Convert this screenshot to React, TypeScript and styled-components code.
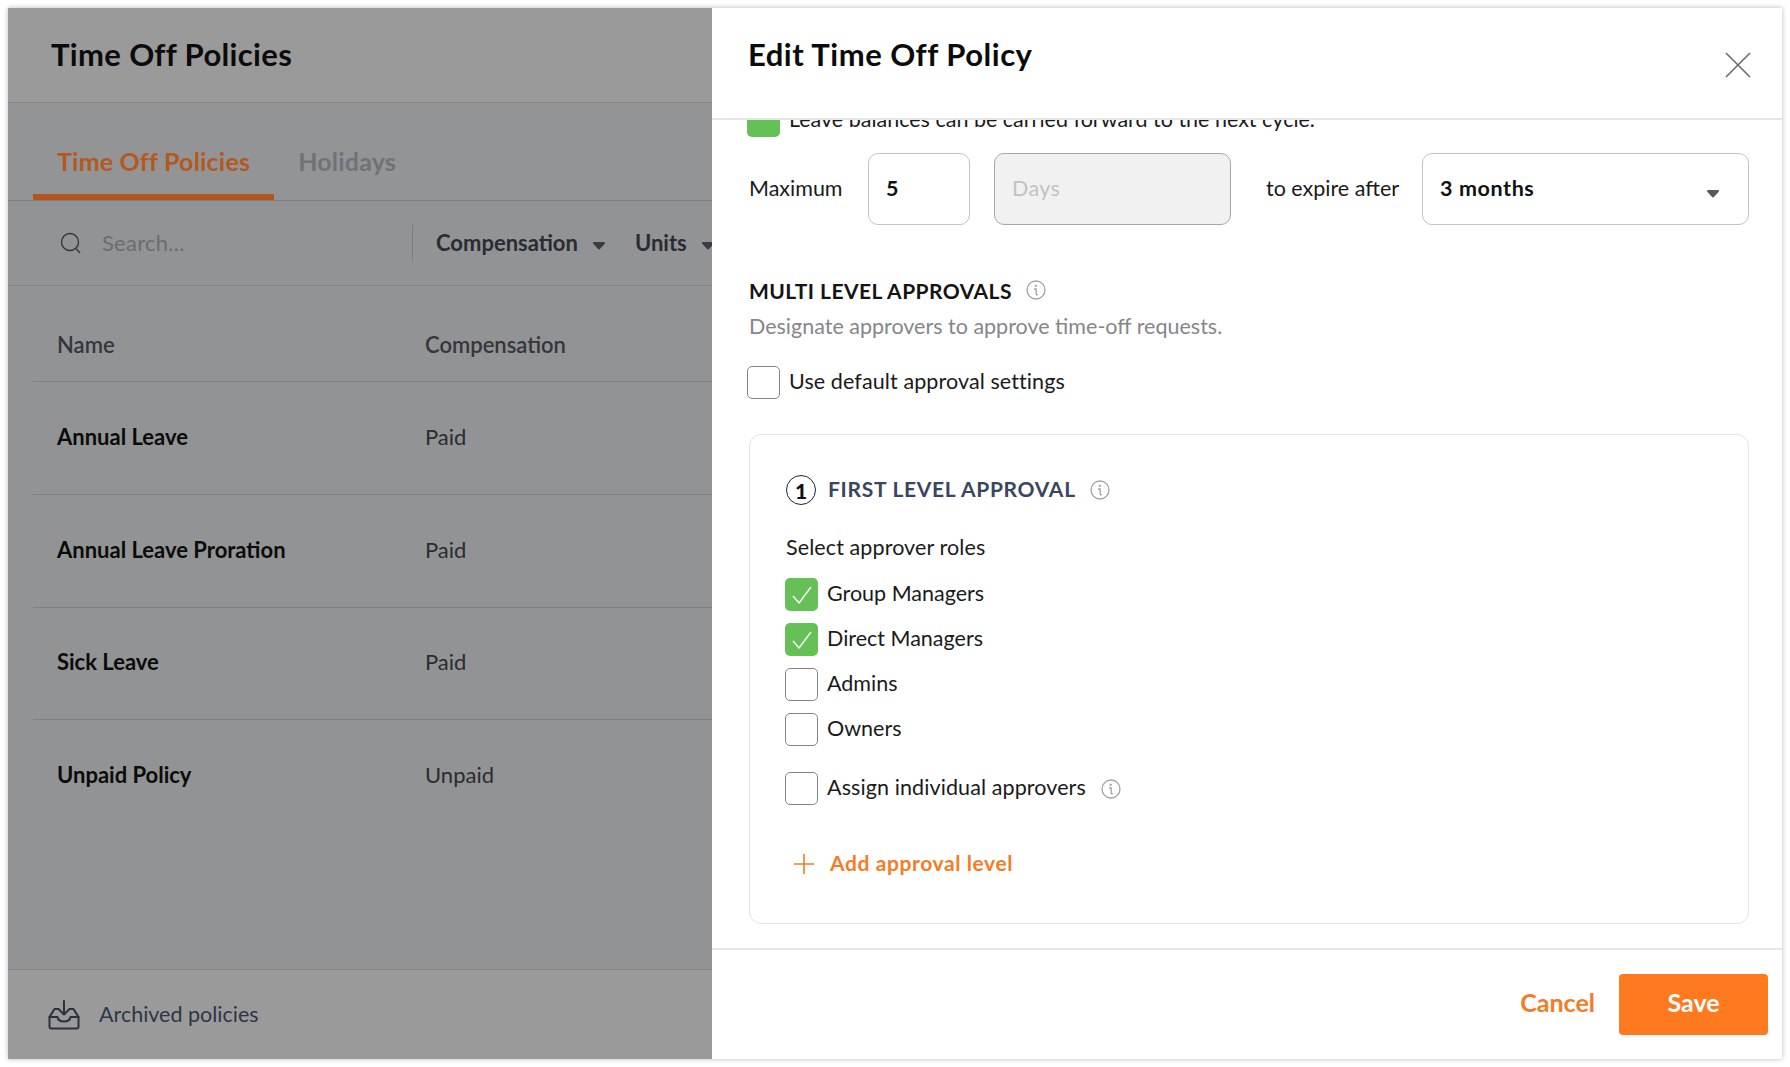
import styled, { createGlobalStyle } from 'styled-components'
import { ReactNode } from 'react'

const GlobalStyle = createGlobalStyle`
  html, body {
    margin: 0;
    padding: 0;
    background: #ffffff;
  }
  body {
    font-family: 'Lato', 'Open Sans', sans-serif;
    color: #111111;
  }
  * {
    box-sizing: border-box;
  }
`

const Page = styled.div`
  width: 1790px;
  height: 1067px;
  padding: 8px;
  background: #ffffff;
`

const Frame = styled.div`
  display: grid;
  grid-template-columns: 704px 1070px;
  height: 1051px;
  box-shadow: 0 0 5px rgba(0, 0, 0, 0.28);
  overflow: hidden;
`

const LeftPane = styled.div`
  display: flex;
  flex-direction: column;
  min-width: 0;
  overflow: hidden;
  background: #929395;
`

const TopBar = styled.div`
  flex: none;
  height: 95px;
  padding: 26px 0 0 43px;
  background: #9a9a9a;
  border-bottom: 1px solid #858688;
`

const PageTitle = styled.h1`
  margin: 0;
  font-size: 31px;
  line-height: 40px;
  font-weight: 700;
  letter-spacing: 0.35px;
  color: #0b0b0b;
`

const TabBar = styled.div`
  flex: none;
  display: flex;
  height: 98px;
  padding: 0 0 0 25px;
  align-items: flex-end;
  background: #939496;
  border-bottom: 1px solid #7f8082;
`

const Tab = styled.div<{ active?: boolean }>`
  height: 97px;
  padding: 40px 24px 0;
  font-size: 25px;
  line-height: 36px;
  font-weight: 700;
  letter-spacing: 0.2px;
  color: ${({ active }) => (active ? '#b3591f' : '#6f7277')};
  border-bottom: ${({ active }) => (active ? '6px solid #b3561d' : '0')};
`

const FilterBar = styled.div`
  flex: none;
  display: flex;
  align-items: center;
  height: 85px;
  padding-left: 52px;
  border-bottom: 1px solid #838486;
  white-space: nowrap;
`

const SearchBox = styled.div`
  flex: none;
  display: flex;
  align-items: center;
  gap: 20px;
  width: 353px;
  height: 36px;
  border-right: 1px solid #7d7e80;
`

const SearchHint = styled.span`
  margin-bottom: 2px;
  font-size: 22px;
  letter-spacing: 0.25px;
  color: #6b6d71;
`

const FilterLabel = styled.span<{ first?: boolean }>`
  flex: none;
  margin-left: ${({ first }) => (first ? '23px' : '29px')};
  margin-bottom: 2px;
  font-size: 22px;
  font-weight: 700;
  color: #2a2c33;
`

const CaretGlyph = styled.svg<{ drop?: number; gapLeft?: number }>`
  flex: none;
  width: 14px;
  height: 9px;
  margin-left: ${({ gapLeft }) => gapLeft ?? 14}px;
  margin-top: ${({ drop }) => drop ?? 4}px;
`

function Caret({ drop, gapLeft, color = '#3c3d42' }: { drop?: number; gapLeft?: number; color?: string }) {
  return (
    <CaretGlyph drop={drop} gapLeft={gapLeft} viewBox="0 0 14 9" fill={color} stroke={color} strokeWidth="2" strokeLinejoin="round">
      <path d="M2 2h10L7 7.500z" />
    </CaretGlyph>
  )
}

const TableRow = styled.div<{ head?: boolean }>`
  flex: none;
  display: grid;
  grid-template-columns: 368px 1fr;
  align-items: center;
  height: ${({ head }) => (head ? '95.5px' : '112.5px')};
  margin-left: 25px;
  padding-left: 24px;
  padding-top: ${({ head }) => (head ? '24px' : '0')};
  border-bottom: ${({ head }) => (head ? '1px solid #7f8082' : '0')};
  font-size: 22px;
  color: #2a2c33;
  & + & + & {
    border-top: 1px solid #7f8082;
  }
`

const HeadCell = styled.span`
  margin-bottom: 2px;
  font-weight: 600;
  color: #34363c;
`

const NameCell = styled.span`
  margin-bottom: 3px;
  font-weight: 700;
  color: #0b0b0b;
`

const PayCell = styled.span`
  margin-bottom: 3px;
`

const ArchiveBar = styled.div`
  flex: none;
  display: flex;
  align-items: center;
  gap: 19px;
  height: 90px;
  margin-top: auto;
  padding-left: 40px;
  background: #9a9a9a;
  border-top: 1px solid #858688;
  font-size: 21.5px;
  color: #2f3546;
`

const ArchiveText = styled.span`
  margin-bottom: 2px;
`

const Drawer = styled.div`
  display: flex;
  flex-direction: column;
  min-width: 0;
  background: #ffffff;
`

const DrawerHeader = styled.div`
  flex: none;
  display: flex;
  justify-content: space-between;
  height: 112px;
  padding: 26px 31px 0 36px;
  border-bottom: 2px solid #e6e6e6;
`

const DrawerTitle = styled.h2`
  margin: 0;
  font-size: 31px;
  line-height: 40px;
  font-weight: 700;
  letter-spacing: 0.5px;
  color: #0b0b0b;
`

const CloseButton = styled.button`
  flex: none;
  align-self: flex-start;
  width: 26px;
  height: 26px;
  margin-top: 18px;
  padding: 0;
  border: 0;
  background: none;
  color: #6a6a6a;
`

const DrawerBody = styled.div`
  flex: 1;
  min-height: 0;
  overflow: hidden;
  padding: 0 33px 0 37px;
`

const Label = styled.span<{ tight?: boolean }>`
  margin-bottom: 4px;
  letter-spacing: ${({ tight }) => (tight ? 0 : 0.1)}px;
`

const CarriedRow = styled.div`
  display: flex;
  align-items: center;
  gap: 9px;
  margin-top: -16px;
  margin-left: -2px;
  font-size: 21.5px;
  color: #1a1a1a;
`

const LimitRow = styled.div`
  display: flex;
  align-items: center;
  height: 72px;
  margin-top: 16px;
  font-size: 21.5px;
  color: #1a1a1a;
`

const MaximumLabel = styled(Label)`
  width: 119px;
  flex: none;
  margin-bottom: 3px;
`

const ExpireLabel = styled(Label)`
  width: 156px;
  flex: none;
  margin-left: 35px;
  margin-bottom: 3px;
`

const Field = styled.div<{ width: number; disabled?: boolean }>`
  flex: none;
  display: flex;
  align-items: center;
  justify-content: space-between;
  width: ${({ width }) => width}px;
  height: 72px;
  padding: 0 28px 3px 17px;
  border: 1.5px solid ${({ disabled }) => (disabled ? '#a8a8a8' : '#c4c4c4')};
  border-radius: 10px;
  background: ${({ disabled }) => (disabled ? '#f1f1f1' : '#ffffff')};
  color: ${({ disabled }) => (disabled ? '#c2c2c2' : '#111111')};
  font-weight: ${({ disabled }) => (disabled ? 400 : 700)};
  letter-spacing: ${({ disabled }) => (disabled ? 0.4 : 0.6)}px;

  & + & {
    margin-left: 24px;
  }
`

const SectionHeading = styled.div`
  display: flex;
  align-items: center;
  gap: 14px;
  height: 28px;
  margin-top: 51px;
  font-size: 21px;
  font-weight: 700;
  letter-spacing: 0.45px;
  color: #141414;
`

const SectionHint = styled.p`
  margin: 8px 0 0;
  font-size: 21.5px;
  line-height: 28px;
  color: #85868a;
`

const DefaultRow = styled(CarriedRow)`
  margin-top: 26px;
`

const Box = styled.span<{ checked?: boolean }>`
  flex: none;
  display: flex;
  align-items: center;
  justify-content: center;
  width: 33px;
  height: 33px;
  border-radius: 5px;
  border: ${({ checked }) => (checked ? '0' : '1.5px solid #858585')};
  background: ${({ checked }) => (checked ? '#65c056' : '#ffffff')};
  color: #ffffff;
`

const ApprovalCard = styled.div`
  height: 490px;
  margin-top: 35px;
  padding: 40px 0 0 35px;
  border: 1.5px solid #e3e3e3;
  border-radius: 12px;
`

const LevelHeading = styled.div`
  display: flex;
  align-items: center;
  height: 30px;
  font-size: 21px;
  font-weight: 700;
  letter-spacing: 0.7px;
  color: #3b4560;
`

const LevelText = styled.span`
  margin-bottom: 4px;
`

const LevelNumber = styled.span`
  flex: none;
  display: flex;
  align-items: center;
  justify-content: center;
  width: 30px;
  height: 30px;
  margin: 0 12px 0 1px;
  border: 1.5px solid #1d2438;
  border-radius: 50%;
  font-size: 21px;
  font-weight: 900;
  letter-spacing: 0;
  color: #0f0f0f;
`

const RolesLabel = styled.div`
  margin: 28px 0 17px 1px;
  font-size: 21.5px;
  line-height: 28px;
  letter-spacing: 0.1px;
  color: #1a1a1a;
`

const RoleList = styled.div`
  display: flex;
  flex-direction: column;
  gap: 12px;
`

const RoleRow = styled.label`
  display: flex;
  align-items: center;
  gap: 9px;
  height: 33px;
  font-size: 21.5px;
  color: #1a1a1a;
`

const AssignRow = styled(RoleRow)`
  margin-top: 26px;
`

const AddLevel = styled.div`
  display: flex;
  align-items: center;
  gap: 16px;
  height: 28px;
  margin: 45px 0 0 9px;
  font-size: 21px;
  font-weight: 700;
  letter-spacing: 0.6px;
  color: #f57c25;
`

const DrawerFooter = styled.div`
  flex: none;
  display: flex;
  align-items: flex-start;
  justify-content: flex-end;
  gap: 24px;
  height: 111px;
  padding: 24px 14px 0 0;
  border-top: 2px solid #e6e6e6;
`

const CancelButton = styled.button`
  height: 61px;
  padding: 0 0 6px;
  border: 0;
  background: none;
  font-family: inherit;
  font-size: 25px;
  font-weight: 700;
  color: #f57c25;
`

const SaveButton = styled.button`
  width: 149px;
  height: 61px;
  padding: 0 0 6px;
  border: 0;
  border-radius: 4px;
  background: #ff7a1f;
  font-family: inherit;
  font-size: 25px;
  font-weight: 700;
  color: #ffffff;
`

const InfoGlyph = styled.svg<{ gapLeft?: number }>`
  flex: none;
  width: 20px;
  height: 20px;
  margin-left: ${({ gapLeft }) => gapLeft ?? 0}px;
  color: #a2a2a2;
`

function InfoIcon({ gapLeft }: { gapLeft?: number }) {
  return (
    <InfoGlyph gapLeft={gapLeft} viewBox="0 0 20 20" fill="none" stroke="currentColor" strokeWidth="1.3">
      <circle cx="10" cy="10" r="9" />
      <path d="M8.4 9h1.800v5.200c0 .5.4.7 1.200.5" strokeLinecap="round" />
      <circle cx="9.800" cy="5.800" r=".5" fill="currentColor" />
    </InfoGlyph>
  )
}

function CheckMark() {
  return (
    <svg width="22" height="20" viewBox="0 0 22 20" fill="none" stroke="currentColor" strokeWidth="1.4">
      <path d="M2 11l6 7L20 2" strokeLinejoin="round" />
    </svg>
  )
}

function Role({ checked, children }: { checked?: boolean; children: ReactNode }) {
  return (
    <RoleRow>
      <Box checked={checked}>{checked && <CheckMark />}</Box>
      <Label tight>{children}</Label>
    </RoleRow>
  )
}

const policies = [
  ['Annual Leave', 'Paid'],
  ['Annual Leave Proration', 'Paid'],
  ['Sick Leave', 'Paid'],
  ['Unpaid Policy', 'Unpaid'],
]

export default function App() {
  return (
    <Page>
      <GlobalStyle />
      <Frame>
        <LeftPane>
          <TopBar>
            <PageTitle>Time Off Policies</PageTitle>
          </TopBar>
          <TabBar>
            <Tab active>Time Off Policies</Tab>
            <Tab>Holidays</Tab>
          </TabBar>
          <FilterBar>
            <SearchBox>
              <svg width="22" height="24" viewBox="0 0 22 24" fill="none" stroke="#34363c" strokeWidth="1.4">
                <circle cx="10" cy="11" r="8.500" />
                <path d="M16 17.500l4 4.500" />
              </svg>
              <SearchHint>Search...</SearchHint>
            </SearchBox>
            <FilterLabel first>Compensation</FilterLabel>
            <Caret />
            <FilterLabel>Units</FilterLabel>
            <Caret />
          </FilterBar>
          <TableRow head>
            <HeadCell>Name</HeadCell>
            <HeadCell>Compensation</HeadCell>
          </TableRow>
          {policies.map(([name, pay]) => (
            <TableRow key={name}>
              <NameCell>{name}</NameCell>
              <PayCell>{pay}</PayCell>
            </TableRow>
          ))}
          <ArchiveBar>
            <svg width="32" height="30" viewBox="0 0 32 30" fill="none" stroke="#2a3042" strokeWidth="2" strokeLinejoin="round" strokeLinecap="round">
              <path d="M1.500 17l5-8h4M30.500 17l-5-8h-4" />
              <path d="M16 1v13M11 9.500l5 5 5-5" />
              <path d="M1.500 17h8c.5 3 3 4.500 6.500 4.500s6-1.500 6.500-4.500h8v9.500a2 2 0 0 1-2 2h-25a2 2 0 0 1-2-2z" />
            </svg>
            <ArchiveText>Archived policies</ArchiveText>
          </ArchiveBar>
        </LeftPane>
        <Drawer>
          <DrawerHeader>
            <DrawerTitle>Edit Time Off Policy</DrawerTitle>
            <CloseButton aria-label="Close">
              <svg width="26" height="26" viewBox="0 0 26 26" fill="none" stroke="currentColor" strokeWidth="1.6">
                <path d="M1 1l24 24M25 1L1 25" />
              </svg>
            </CloseButton>
          </DrawerHeader>
          <DrawerBody>
            <CarriedRow>
              <Box checked />
              <Label tight>Leave balances can be carried forward to the next cycle.</Label>
            </CarriedRow>
            <LimitRow>
              <MaximumLabel tight>Maximum</MaximumLabel>
              <Field width={102}>5</Field>
              <Field width={237} disabled>Days</Field>
              <ExpireLabel tight>to expire after</ExpireLabel>
              <Field width={327}>
                3 months
                <Caret color="#5a5a5a" drop={11} />
              </Field>
            </LimitRow>
            <SectionHeading>
              MULTI LEVEL APPROVALS
              <InfoIcon />
            </SectionHeading>
            <SectionHint>Designate approvers to approve time-off requests.</SectionHint>
            <DefaultRow>
              <Box />
              <Label>Use default approval settings</Label>
            </DefaultRow>
            <ApprovalCard>
              <LevelHeading>
                <LevelNumber>1</LevelNumber>
                <LevelText>FIRST LEVEL APPROVAL</LevelText>
                <InfoIcon gapLeft={14} />
              </LevelHeading>
              <RolesLabel>Select approver roles</RolesLabel>
              <RoleList>
                <Role checked>Group Managers</Role>
                <Role checked>Direct Managers</Role>
                <Role>Admins</Role>
                <Role>Owners</Role>
              </RoleList>
              <AssignRow>
                <Box />
                <Label>Assign individual approvers</Label>
                <InfoIcon gapLeft={6} />
              </AssignRow>
              <AddLevel>
                <svg width="20" height="20" viewBox="0 0 20 20" fill="none" stroke="currentColor" strokeWidth="1.6">
                  <path d="M10 0v20M0 10h20" />
                </svg>
                <LevelText>Add approval level</LevelText>
              </AddLevel>
            </ApprovalCard>
          </DrawerBody>
          <DrawerFooter>
            <CancelButton>Cancel</CancelButton>
            <SaveButton>Save</SaveButton>
          </DrawerFooter>
        </Drawer>
      </Frame>
    </Page>
  )
}
